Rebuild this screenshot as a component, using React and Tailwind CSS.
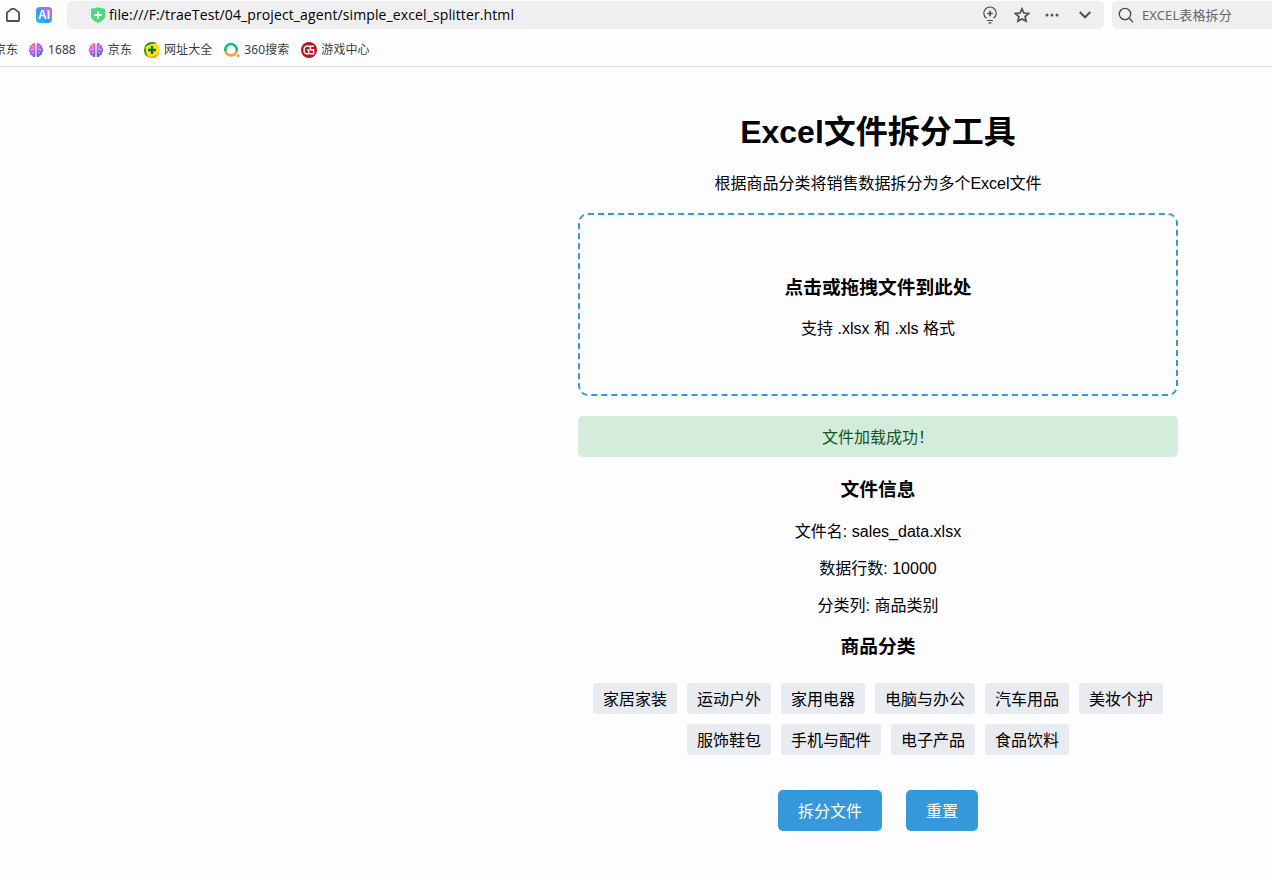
import React, { useState } from 'react';

const CATEGORIES = [
  '家居家装', '运动户外', '家用电器', '电脑与办公', '汽车用品', '美妆个护',
  '服饰鞋包', '手机与配件', '电子产品', '食品饮料',
];

const FILE_INFO = [
  { label: '文件名', value: 'sales_data.xlsx' },
  { label: '数据行数', value: '10000' },
  { label: '分类列', value: '商品类别' },
];

// ── Icons ──────────────────────────────────────────────────────────────────
const HomeIcon = () => (
  <svg className="w-4 h-4" viewBox="0 0 16 16" fill="none" stroke="#505054" strokeWidth="1.8" strokeLinejoin="round">
    <path d="M2.700 14H13.300a.8.8 0 0 0 .8-.8V5.600L9.300 1.900H6.700L1.900 5.600v7.600a.8.8 0 0 0 .8.8z" />
  </svg>
);

const AiIcon = () => (
  <div className="w-4 h-4 rounded bg-linear-to-tr from-[#18c8fa] via-[#3a8ff8] to-[#e936e0] flex items-center justify-center font-['Liberation_Sans'] text-[12px] leading-none font-bold text-white">
    AI
  </div>
);

const ShieldIcon = () => (
  <svg className="w-[14px] h-4" viewBox="0 0 14 16">
    <path d="M7 .3Q10 1.500 14 1.700V9c0 3.200-3 5.400-7 6.700C3 14.400 0 12.200 0 9V1.700Q4 1.500 7 .3z" fill="#4ad880" />
    <path d="M7 4v8M3 8h8" stroke="#fff" strokeWidth="2" />
  </svg>
);

const BulbIcon = () => (
  <svg className="w-4 h-[18px]" viewBox="0 0 16 18" fill="none" stroke="#48484c" strokeWidth="1.2">
    <path d="M4.500 12.300A6.200 6.200 0 1 1 11.500 12.300" />
    <path d="M8 4.800v5.400M5.300 7.500h5.400" strokeWidth="1.500" />
    <path d="M5 14.500h6M6.500 16.900h3" />
  </svg>
);

const StarIcon = () => (
  <svg className="w-4 h-4" viewBox="0 0 16 16" fill="none" stroke="#505054" strokeWidth="1.700">
    <path d="M8 1.800l1.900 4.200 4.700.5-3.500 3.100 1 4.600L8 11.900l-4.100 2.300 1-4.600L1.400 6.500l4.700-.5z" />
  </svg>
);

const DotsIcon = () => (
  <svg className="w-[14px] h-1" viewBox="0 0 14 4" fill="#55555a">
    <circle cx="2" cy="2" r="1.5" />
    <circle cx="7" cy="2" r="1.5" />
    <circle cx="12" cy="2" r="1.5" />
  </svg>
);

const ChevronIcon = () => (
  <svg className="w-3 h-2" viewBox="0 0 12 8" fill="none" stroke="#505054" strokeWidth="2">
    <path d="M.7 1 6 6.3 11.3 1" />
  </svg>
);

const SearchIcon = () => (
  <svg className="w-4 h-4" viewBox="0 0 16 16" fill="none" stroke="#48484c" strokeWidth="1.3" strokeLinecap="round">
    <circle cx="7" cy="7" r="5.7" />
    <path d="M11.2 11.2 14.7 14.7" />
  </svg>
);

const BrainIcon = ({ id }) => (
  <svg className="w-4 h-4" viewBox="0 0 16 16">
    <defs>
      <linearGradient id={id} x1="0.1" y1="0" x2="0.7" y2="1">
        <stop offset="0" stopColor="#ff8a78" />
        <stop offset="0.4" stopColor="#d05be0" />
        <stop offset="1" stopColor="#4a68f5" />
      </linearGradient>
    </defs>
    <path
      d="M7.4 1.500C6 .4 4 1 3.800 2.700 2 3 1.400 4.600 2 5.800.2 6.600.2 9.400 1.900 10.200c-.5 1.800.7 3.200 2.300 3.200.5 1.600 2.200 2 3.200 1zM8.600 1.500c1.400-1.100 3.400-.5 3.600 1.200 1.800.3 2.400 1.900 1.800 3.100 1.800.8 1.800 3.600.1 4.400.5 1.800-.7 3.200-2.300 3.200-.5 1.600-2.200 2-3.200 1z"
      fill={`url(#${id})`}
    />
    <path
      d="M2.500 7.800h2.200l1-1.500M4.200 4.200l1.200 1M4 11.500l1.500-1.300M13.500 7.800h-2.200l-1-1.500M11.800 4.200l-1.200 1M12 11.500l-1.500-1.300"
      fill="none" stroke="#fdfdff" strokeWidth=".8"
    />
  </svg>
);

const NavSiteIcon = () => (
  <svg className="w-4 h-4" viewBox="0 0 16 16">
    <circle cx="8" cy="8" r="8" fill="#ffe11a" />
    <path d="M.3 6A8 8 0 0 1 12.8 1.600C9 .9 3.500 2.400.3 6z" fill="#15913b" />
    <path d="M15.7 10A8 8 0 0 1 3.200 14.400C7 15.100 12.500 13.600 15.700 10z" fill="#f5aa13" />
    <path d="M.1 7A8 8 0 0 0 5 15.400C2.400 13 1.300 9 2 5z" fill="#279d3b" />
    <path d="M8 4v8M4 8h8" stroke="#087027" strokeWidth="2.4" />
  </svg>
);

const SoIcon = () => (
  <svg className="w-4 h-4" viewBox="0 0 16 16" fill="none" strokeWidth="2.6">
    <path d="M1.500 9.200A5.700 5.700 0 1 1 12.500 9.200" stroke="#18b979" />
    <path d="M12.500 9.200A5.700 5.700 0 0 1 1.500 9.200" stroke="#f9a03c" />
    <circle cx="14.200" cy="13.700" r="1.5" fill="#f99a35" />
  </svg>
);

const GameIcon = () => (
  <svg className="w-4 h-4" viewBox="0 0 16 16" fill="none" stroke="#fff" strokeWidth="1.4">
    <circle cx="8" cy="8" r="8" fill="#b9151f" stroke="none" />
    <path d="M13 4.300H5L3.200 6v4.200L5 11.700h2.800V8H5.800" />
    <path d="M9.400 4.300v3.400h3.200v4H8.800" />
  </svg>
);

const BOOKMARKS = [
  { name: '1688', icon: <BrainIcon id="brain-a" /> },
  { name: '京东', icon: <BrainIcon id="brain-b" /> },
  { name: '网址大全', icon: <NavSiteIcon /> },
  { name: '360搜索', icon: <SoIcon /> },
  { name: '游戏中心', icon: <GameIcon /> },
];

// ── Browser bar ────────────────────────────────────────────────────────────
const BrowserBar = () => (
  <header className="h-[67px] border-b border-[#dfdfe3] font-['Noto_Sans','Noto_Sans_CJK_SC',sans-serif] overflow-hidden">
    <div className="flex items-start">
      <div className="w-[67px] h-[30px] shrink-0 flex items-center pl-[5px] gap-[15px]">
        <HomeIcon />
        <AiIcon />
      </div>
      <div className="mt-px w-[1037px] h-7 shrink-0 rounded-[5px] bg-[#efeff1] flex items-center pl-6 pr-[13px]">
        <ShieldIcon />
        <span className="ml-1 text-sm leading-5 tracking-[0.115px] text-black whitespace-nowrap font-['Open_Sans',sans-serif]">
          file:///F:/traeTest/04_project_agent/simple_excel_splitter.html
        </span>
        <div className="ml-auto flex items-center">
          <BulbIcon />
          <span className="ml-4"><StarIcon /></span>
          <span className="ml-[15px]"><DotsIcon /></span>
          <span className="ml-5"><ChevronIcon /></span>
        </div>
      </div>
      <div className="mt-px ml-2 flex-1 h-7 rounded-l-[5px] bg-[#efeff1] flex items-center pl-[6px] gap-2">
        <SearchIcon />
        <span className="text-[13px] leading-5 tracking-[0.1px] text-[#66666a] whitespace-nowrap">EXCEL表格拆分</span>
      </div>
    </div>
    <nav className="mt-[10px] h-5 flex items-center gap-3 text-xs text-[#3c3c40] whitespace-nowrap">
      <span className="-ml-[6px] -mr-[2px]">京东</span>
      {BOOKMARKS.map((b, i) => (
        <div key={i} className="flex items-center gap-1">
          {b.icon}
          <span className="tracking-[0.08px]">{b.name}</span>
        </div>
      ))}
    </nav>
  </header>
);

const ActionButton = ({ children, onClick }) => (
  <button onClick={onClick} className="h-[41px] px-5 pt-0.5 rounded-[5px] bg-[#3498db] text-white text-base cursor-pointer">
    {children}
  </button>
);

const App = () => {
  const [loaded, setLoaded] = useState(true);

  return (
    <div className="h-[874px] bg-[#fdfdff] overflow-hidden">
      <BrowserBar />

      <main className="ml-[578px] w-[600px] pt-[45px] text-center text-base leading-6 text-black font-['Liberation_Sans','Noto_Sans_CJK_SC',sans-serif]">
        <h1 className="text-[32px] leading-10 font-bold">Excel文件拆分工具</h1>
        <p className="mt-5">根据商品分类将销售数据拆分为多个Excel文件</p>

        {/* Upload area */}
        <div
          onClick={() => setLoaded(true)}
          className="mt-[17px] h-[183px] pt-[61px] rounded-[10px] border-2 border-dashed border-[#3498db] cursor-pointer"
        >
          <h3 className="text-[18.72px] leading-6 font-bold">点击或拖拽文件到此处</h3>
          <p className="mt-[17px]">支持 .xlsx 和 .xls 格式</p>
        </div>

        {loaded && (
          <>
            <div className="mt-5 h-[41px] pt-0.5 rounded-[5px] bg-[#d3ecdb] text-[#155724] flex items-center justify-center">
              文件加载成功！
            </div>

            {/* File info */}
            <h3 className="mt-[21px] mb-[18px] text-[18.72px] leading-6 font-bold">文件信息</h3>
            <div className="flex flex-col gap-[13px]">
              {FILE_INFO.map(f => <p key={f.label}>{f.label}: {f.value}</p>)}
            </div>

            {/* Categories */}
            <h3 className="mt-[17px] text-[18.72px] leading-6 font-bold">商品分类</h3>
            <div className="mt-6 flex flex-wrap justify-center gap-[10px]">
              {CATEGORIES.map(c => (
                <span key={c} className="h-[31px] px-[10px] pt-0.5 rounded-[3px] bg-[#e8ebf0] flex items-center">{c}</span>
              ))}
            </div>

            <div className="mt-[35px] flex justify-center gap-6">
              <ActionButton>拆分文件</ActionButton>
              <ActionButton onClick={() => setLoaded(false)}>重置</ActionButton>
            </div>
          </>
        )}
      </main>
    </div>
  );
};

export default App;
